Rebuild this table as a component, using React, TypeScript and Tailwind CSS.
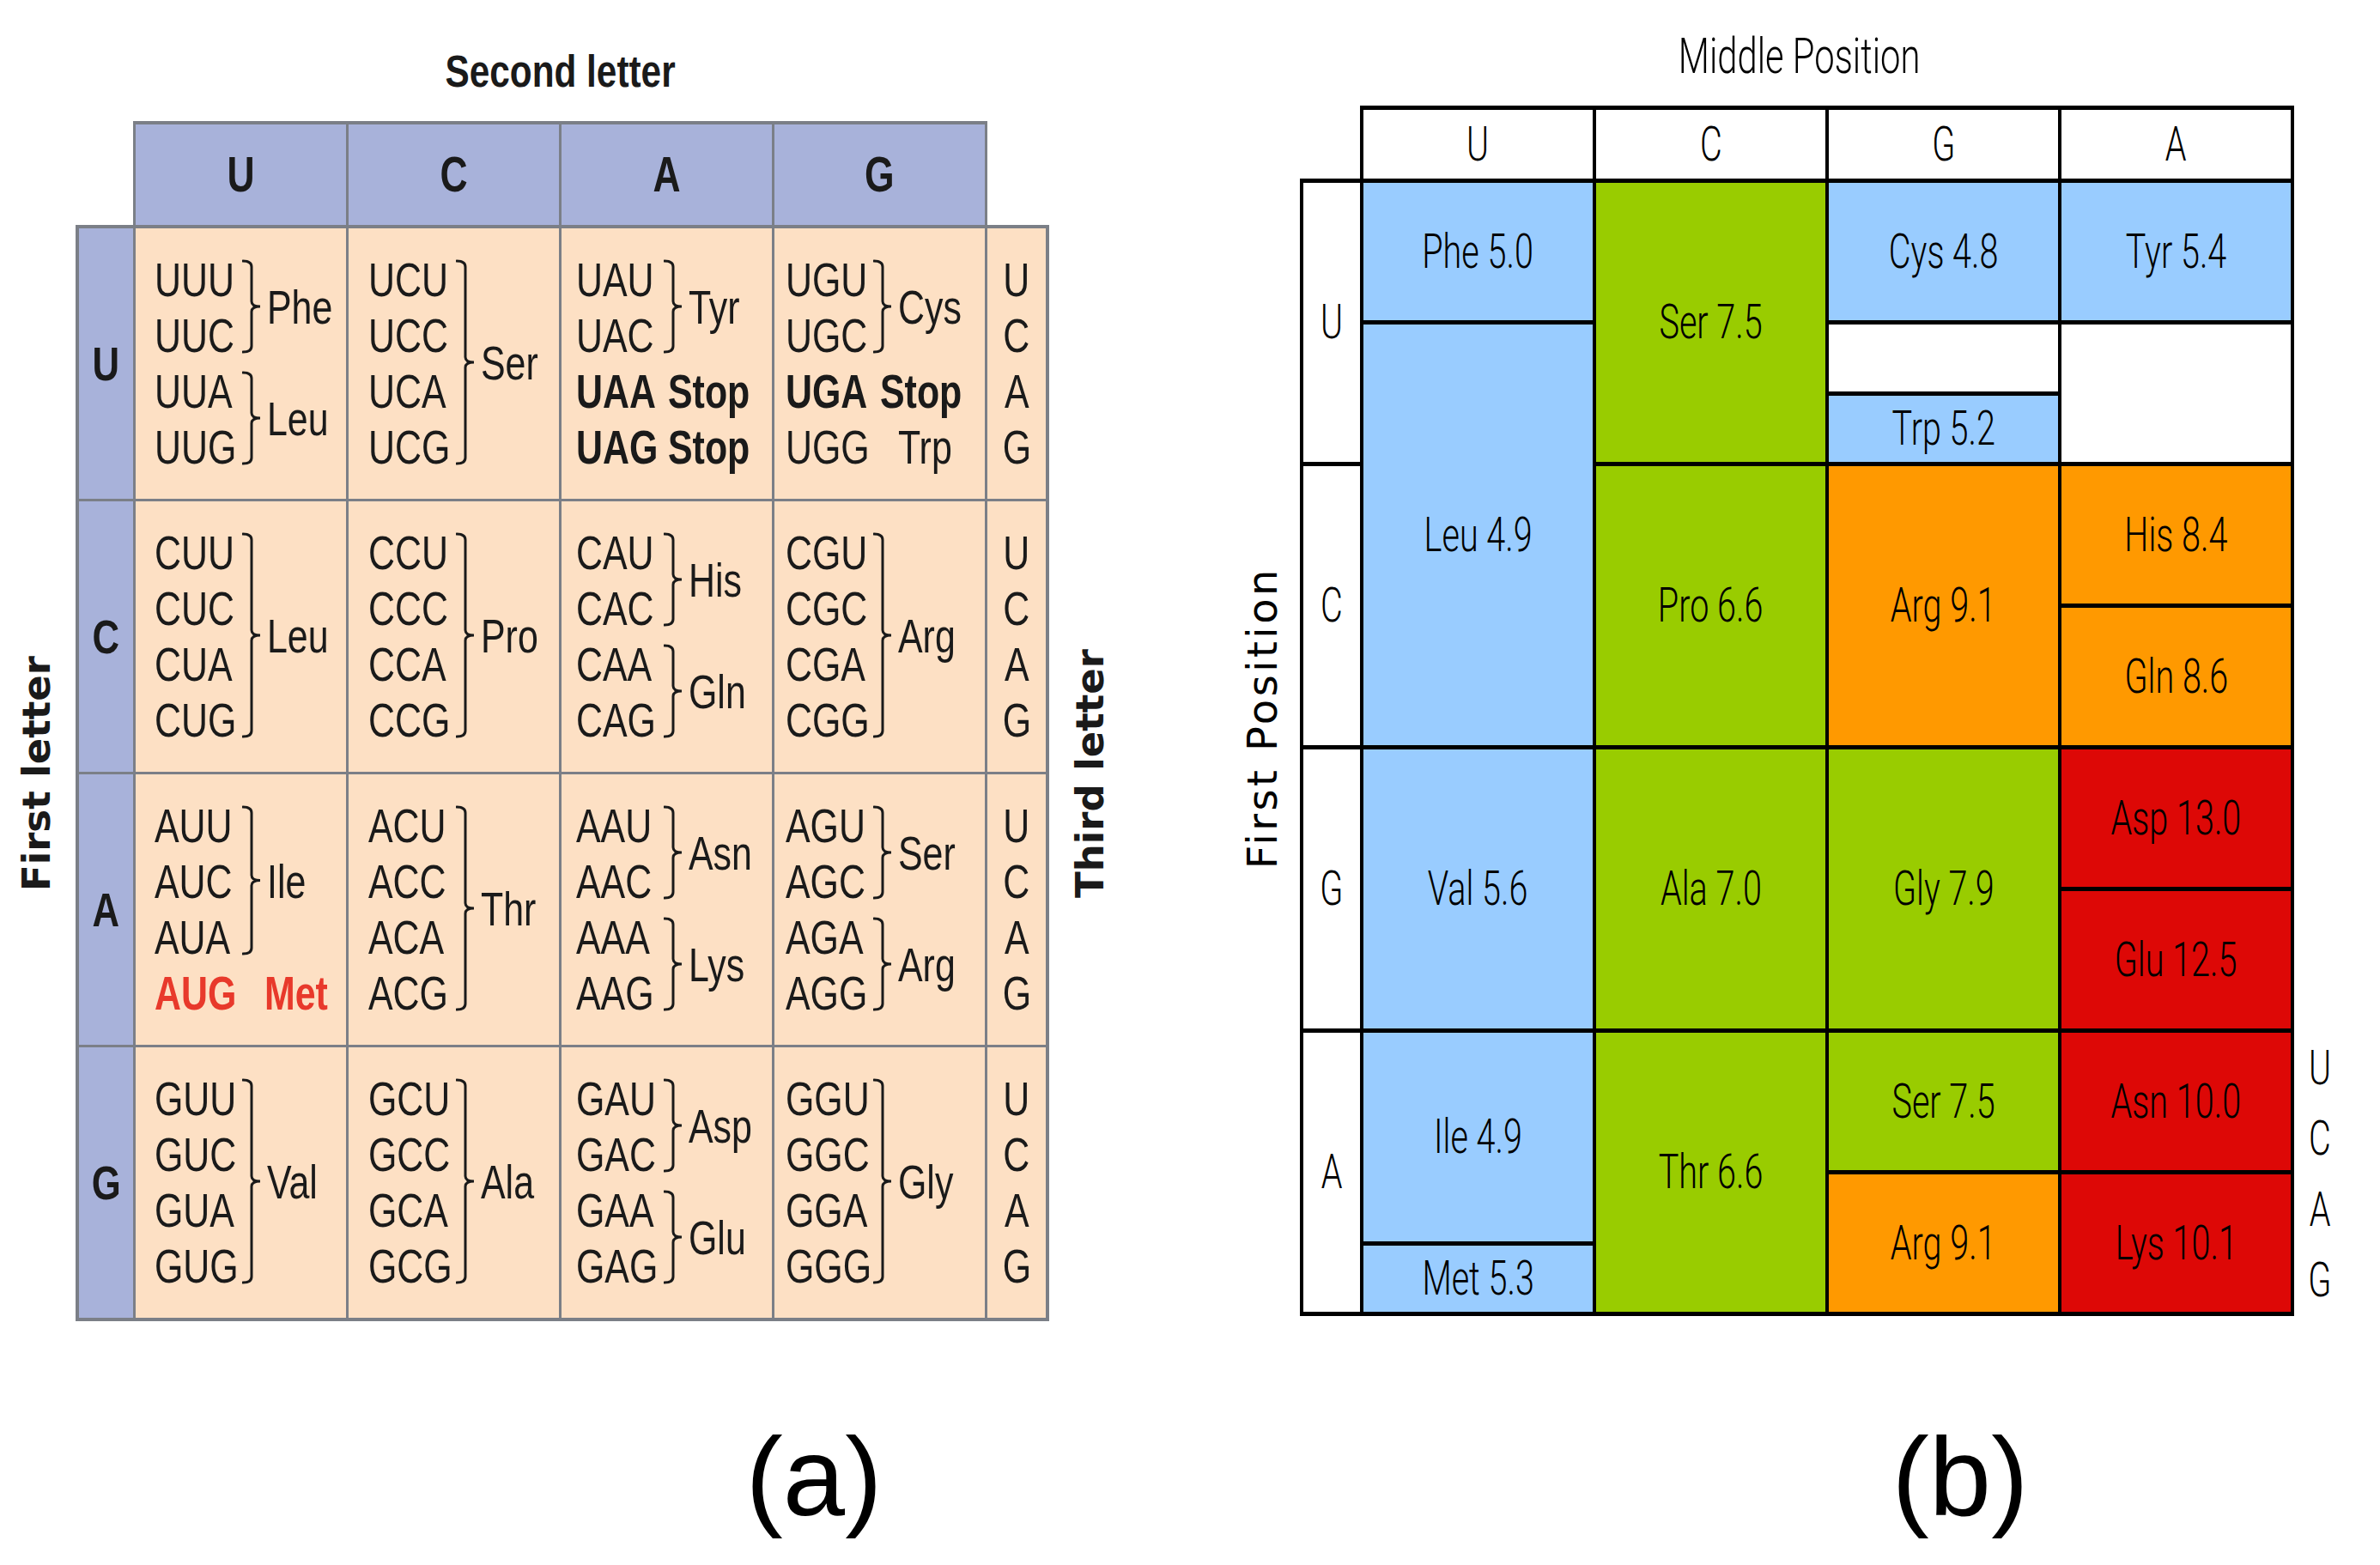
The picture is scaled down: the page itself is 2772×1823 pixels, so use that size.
import React from "react";

type Item = { codons: string[]; aa: string; bold?: boolean; red?: boolean };

const sans = "[font-family:'Liberation_Sans',Arial,sans-serif]";
const squeeze = "inline-block whitespace-nowrap scale-x-[0.78]";
const thin = "[font-family:Roboto,'Liberation_Sans',sans-serif] font-light";
const bText = `${thin} inline-block whitespace-nowrap scale-x-[0.72] text-[55px] leading-none text-black`;

const rowsA: { first: string; cells: Item[][] }[] = [
  {
    first: "U",
    cells: [
      [{ codons: ["UUU", "UUC"], aa: "Phe" }, { codons: ["UUA", "UUG"], aa: "Leu" }],
      [{ codons: ["UCU", "UCC", "UCA", "UCG"], aa: "Ser" }],
      [
        { codons: ["UAU", "UAC"], aa: "Tyr" },
        { codons: ["UAA"], aa: "Stop", bold: true },
        { codons: ["UAG"], aa: "Stop", bold: true },
      ],
      [
        { codons: ["UGU", "UGC"], aa: "Cys" },
        { codons: ["UGA"], aa: "Stop", bold: true },
        { codons: ["UGG"], aa: "Trp" },
      ],
    ],
  },
  {
    first: "C",
    cells: [
      [{ codons: ["CUU", "CUC", "CUA", "CUG"], aa: "Leu" }],
      [{ codons: ["CCU", "CCC", "CCA", "CCG"], aa: "Pro" }],
      [{ codons: ["CAU", "CAC"], aa: "His" }, { codons: ["CAA", "CAG"], aa: "Gln" }],
      [{ codons: ["CGU", "CGC", "CGA", "CGG"], aa: "Arg" }],
    ],
  },
  {
    first: "A",
    cells: [
      [{ codons: ["AUU", "AUC", "AUA"], aa: "Ile" }, { codons: ["AUG"], aa: "Met", red: true, bold: true }],
      [{ codons: ["ACU", "ACC", "ACA", "ACG"], aa: "Thr" }],
      [{ codons: ["AAU", "AAC"], aa: "Asn" }, { codons: ["AAA", "AAG"], aa: "Lys" }],
      [{ codons: ["AGU", "AGC"], aa: "Ser" }, { codons: ["AGA", "AGG"], aa: "Arg" }],
    ],
  },
  {
    first: "G",
    cells: [
      [{ codons: ["GUU", "GUC", "GUA", "GUG"], aa: "Val" }],
      [{ codons: ["GCU", "GCC", "GCA", "GCG"], aa: "Ala" }],
      [{ codons: ["GAU", "GAC"], aa: "Asp" }, { codons: ["GAA", "GAG"], aa: "Glu" }],
      [{ codons: ["GGU", "GGC", "GGA", "GGG"], aa: "Gly" }],
    ],
  },
];

const colPad = ["pl-[22px]", "pl-[23px]", "pl-[17px]", "pl-[13px]"];

// right-hand table: [grid placement, colour, label]
const blue = "bg-[#99ccff]";
const green = "bg-[#99cc00]";
const orange = "bg-[#ff9900]";
const red = "bg-[#dd0806]";
const white = "bg-white";

const cellsB: [string, string, string][] = [
  ["col-start-1 row-start-1 row-span-4", white, "U"],
  ["col-start-1 row-start-5 row-span-4", white, "C"],
  ["col-start-1 row-start-9 row-span-4", white, "G"],
  ["col-start-1 row-start-13 row-span-4", white, "A"],

  ["col-start-2 row-start-1 row-span-2", blue, "Phe 5.0"],
  ["col-start-2 row-start-3 row-span-6", blue, "Leu 4.9"],
  ["col-start-2 row-start-9 row-span-4", blue, "Val 5.6"],
  ["col-start-2 row-start-13 row-span-3", blue, "Ile 4.9"],
  ["col-start-2 row-start-16 row-span-1", blue, "Met 5.3"],

  ["col-start-3 row-start-1 row-span-4", green, "Ser 7.5"],
  ["col-start-3 row-start-5 row-span-4", green, "Pro 6.6"],
  ["col-start-3 row-start-9 row-span-4", green, "Ala 7.0"],
  ["col-start-3 row-start-13 row-span-4", green, "Thr 6.6"],

  ["col-start-4 row-start-1 row-span-2", blue, "Cys 4.8"],
  ["col-start-4 row-start-3 row-span-1", white, ""],
  ["col-start-4 row-start-4 row-span-1", blue, "Trp 5.2"],
  ["col-start-4 row-start-5 row-span-4", orange, "Arg 9.1"],
  ["col-start-4 row-start-9 row-span-4", green, "Gly 7.9"],
  ["col-start-4 row-start-13 row-span-2", green, "Ser 7.5"],
  ["col-start-4 row-start-15 row-span-2", orange, "Arg 9.1"],

  ["col-start-5 row-start-1 row-span-2", blue, "Tyr 5.4"],
  ["col-start-5 row-start-3 row-span-2", white, ""],
  ["col-start-5 row-start-5 row-span-2", orange, "His 8.4"],
  ["col-start-5 row-start-7 row-span-2", orange, "Gln 8.6"],
  ["col-start-5 row-start-9 row-span-2", red, "Asp 13.0"],
  ["col-start-5 row-start-11 row-span-2", red, "Glu 12.5"],
  ["col-start-5 row-start-13 row-span-2", red, "Asn 10.0"],
  ["col-start-5 row-start-15 row-span-2", red, "Lys 10.1"],
];

function Brace({ n }: { n: number }) {
  const h = n * 65;
  const top = 10;
  const bot = h - 14;
  const mid = (top + bot) / 2;
  const d = `M1 ${top} Q11 ${top} 11 ${top + 7} V${mid - 6} Q11 ${mid} 21 ${mid} Q11 ${mid} 11 ${mid + 6} V${bot - 7} Q11 ${bot} 1 ${bot}`;
  return (
    <svg width="24" height={h} className="shrink-0">
      <path d={d} fill="none" stroke="#1a1a1a" strokeWidth="3" strokeLinecap="round" />
    </svg>
  );
}

function CodonGroup({ item }: { item: Item }) {
  const tone = item.red ? "text-[#e8392b]" : "text-[#1a1a1a]";
  const weight = item.bold ? "font-bold" : "";
  return (
    <div className={`flex items-center ${tone} ${weight}`}>
      <div className="w-[102px] flex flex-col">
        {item.codons.map((c) => (
          <div key={c} className="h-[65px] leading-[65px]">
            <span className={`${squeeze} origin-left`}>{c}</span>
          </div>
        ))}
      </div>
      {item.codons.length > 1 ? <Brace n={item.codons.length} /> : <div className="w-[24px]" />}
      <div className="ml-[5px] leading-none">
        <span className={`${squeeze} origin-left`}>{item.aa}</span>
      </div>
    </div>
  );
}

function PanelA() {
  return (
    <div className={`w-[1426px] shrink-0 flex flex-col pt-[58px] ${sans} text-[#1a1a1a]`}>
      <div className="ml-[135px] w-[995px] text-center text-[51px] leading-none font-bold">
        <span className="inline-block whitespace-nowrap scale-x-[0.83]">Second letter</span>
      </div>

      <div className="ml-[135px] mt-[32px] w-[995px] grid grid-cols-[repeat(4,245px)] gap-x-[3px] bg-[#7b7f87] pt-[4px] px-[3px]">
        {["U", "C", "A", "G"].map((l) => (
          <div key={l} className="h-[117px] bg-[#a8b2da] flex items-center justify-center font-bold text-[57px] leading-none">
            <span className={squeeze}>{l}</span>
          </div>
        ))}
      </div>

      <div className="flex items-center">
        <div className="w-[45px] mr-[23px] [writing-mode:vertical-rl] rotate-180 [font-family:'DejaVu_Sans',sans-serif] font-bold text-[45px] leading-none">
          First letter
        </div>

        <div className="grid grid-cols-[63px_repeat(4,245px)_68px] grid-rows-[repeat(4,315px)] gap-[3px] bg-[#7b7f87] p-[4px]">
          {rowsA.map((row) => (
            <React.Fragment key={row.first}>
              <div className="bg-[#a8b2da] flex items-center justify-center font-bold text-[56px] leading-none">
                <span className={squeeze}>{row.first}</span>
              </div>
              {row.cells.map((cell, ci) => (
                <div key={ci} className={`bg-[#fde0c4] flex flex-col justify-center text-[55px] ${colPad[ci]}`}>
                  {cell.map((item, ii) => (
                    <CodonGroup key={ii} item={item} />
                  ))}
                </div>
              ))}
              <div className="bg-[#fde0c4] flex flex-col items-center justify-center text-[55px]">
                {["U", "C", "A", "G"].map((l) => (
                  <div key={l} className="h-[65px] leading-[65px]">
                    <span className={squeeze}>{l}</span>
                  </div>
                ))}
              </div>
            </React.Fragment>
          ))}
        </div>

        <div className="w-[45px] ml-[25px] [writing-mode:vertical-rl] rotate-180 [font-family:'DejaVu_Sans',sans-serif] font-bold text-[45px] leading-none">
          Third letter
        </div>
      </div>
    </div>
  );
}

function PanelB() {
  return (
    <div className="flex flex-col pt-[36px]">
      <div className="ml-[138px] w-[1088px] pr-[64px] text-center">
        <span className={`${thin} inline-block whitespace-nowrap scale-x-[0.72] text-[58px] leading-none`}>
          Middle Position
        </span>
      </div>

      <div className="ml-[138px] mt-[29px] w-[1088px] grid grid-cols-[repeat(4,267px)] gap-x-[4px] bg-black pt-[5px] px-[4px]">
        {["U", "C", "G", "A"].map((l) => (
          <div key={l} className="h-[80px] bg-white flex items-center justify-center">
            <span className={bText}>{l}</span>
          </div>
        ))}
      </div>

      <div className="flex items-start">
        <div className="w-[48px] mr-[20px] mt-[452px] [writing-mode:vertical-rl] rotate-180 [font-family:'DejaVu_Sans',sans-serif] text-[48px] tracking-[3.5px] leading-none text-black">
          First Position
        </div>

        <div className="grid grid-cols-[66px_repeat(4,267px)] grid-rows-[repeat(16,77.5px)] gap-x-[4px] gap-y-[5px] bg-black px-[4px] py-[5px]">
          {cellsB.map(([pos, bg, label], i) => (
            <div key={i} className={`${pos} ${bg} flex items-center justify-center`}>
              {label && <span className={bText}>{label}</span>}
            </div>
          ))}
        </div>

        <div className="self-end w-[60px] flex flex-col">
          {["U", "C", "A", "G"].map((l) => (
            <div key={l} className="h-[82.5px] flex items-center justify-center">
              <span className={bText}>{l}</span>
            </div>
          ))}
        </div>
      </div>
    </div>
  );
}

export default function App() {
  return (
    <div className="w-[2772px] h-[1823px] bg-white flex flex-col overflow-hidden">
      <div className="flex items-start pl-[20px]">
        <PanelA />
        <PanelB />
      </div>

      <div className="mt-[116px] flex [font-family:'Liberation_Sans',sans-serif] text-[130px] leading-none text-black">
        <div className="w-[1896px] text-center">(a)</div>
        <div className="w-[774px] text-center">(b)</div>
      </div>
    </div>
  );
}
